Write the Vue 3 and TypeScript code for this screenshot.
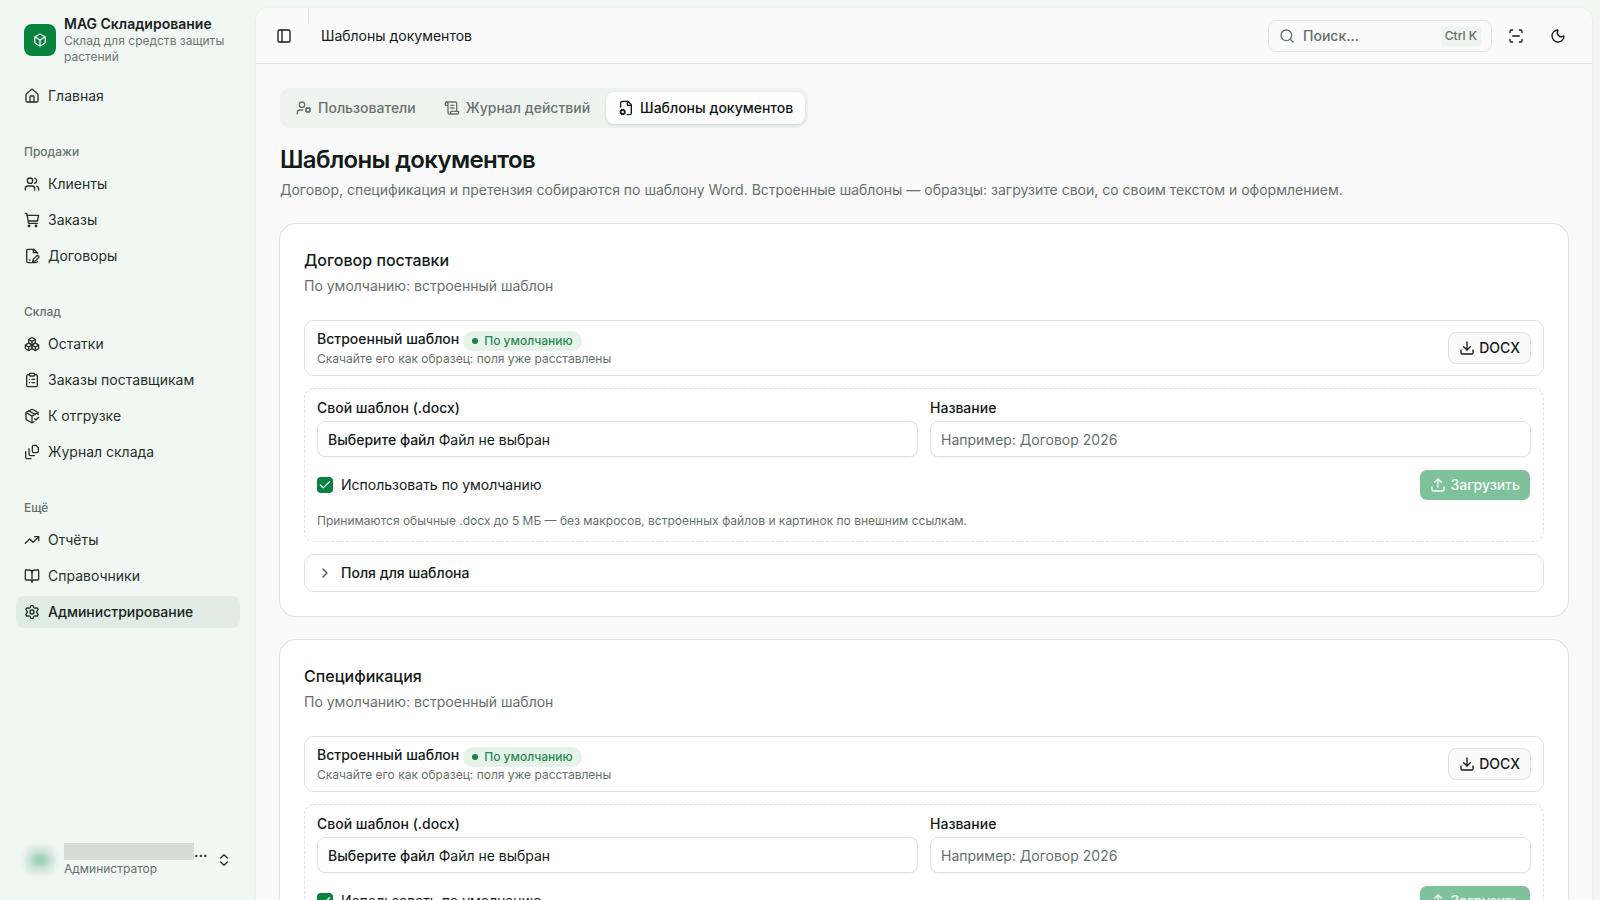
<script setup lang="ts">
import { h, type FunctionalComponent } from 'vue'

const icons: Record<string, string[]> = {
  box: ['M21 8a2 2 0 0 0-1-1.73l-7-4a2 2 0 0 0-2 0l-7 4A2 2 0 0 0 3 8v8a2 2 0 0 0 1 1.73l7 4a2 2 0 0 0 2 0l7-4A2 2 0 0 0 21 16Z', 'm3.3 7 8.7 5 8.7-5', 'M12 22V12'],
  house: ['M15 21v-8a1 1 0 0 0-1-1h-4a1 1 0 0 0-1 1v8', 'M3 10a2 2 0 0 1 .709-1.528l7-6a2 2 0 0 1 2.582 0l7 6A2 2 0 0 1 21 10v9a2 2 0 0 1-2 2H5a2 2 0 0 1-2-2z'],
  users: ['M16 21v-2a4 4 0 0 0-4-4H6a4 4 0 0 0-4 4v2', 'M16 3.128a4 4 0 0 1 0 7.744', 'M22 21v-2a4 4 0 0 0-3-3.87', 'M5 7a4 4 0 1 0 8 0a4 4 0 1 0-8 0'],
  cart: ['M6.3 21a1.2 1.2 0 1 0 2.4 0a1.2 1.2 0 1 0-2.4 0', 'M16.8 21a1.2 1.2 0 1 0 2.4 0a1.2 1.2 0 1 0-2.4 0', 'M2 2h2.2L7 17h13', 'M4.8 5H22l-1.8 8.5H6.4'],
  contract: ['m18.2 12.6.8-.8a2 2 0 0 1 2.8 2.8l-5.1 5.1-3.7.9.9-3.7z', 'M20 8V7l-5-5H6a2 2 0 0 0-2 2v16a2 2 0 0 0 2 2h12a2 2 0 0 0 2-2', 'M14 2v5h6', 'M8 18h1'],
  boxes: ['M2.97 12.92A2 2 0 0 0 2 14.63v3.24a2 2 0 0 0 .97 1.71l3 1.8a2 2 0 0 0 2.06 0L12 19v-5.5l-5-3-4.03 2.42Z', 'm7 16.5-4.74-2.85', 'm7 16.5 5-3', 'M7 16.5v5.17', 'M12 13.5V19l3.97 2.38a2 2 0 0 0 2.06 0l3-1.8a2 2 0 0 0 .97-1.71v-3.24a2 2 0 0 0-.97-1.71L17 10.5l-5 3Z', 'm17 16.5-5-3', 'm17 16.5 4.74-2.85', 'M17 16.5v5.17', 'M7.97 4.42A2 2 0 0 0 7 6.13v4.37l5 3 5-3V6.13a2 2 0 0 0-.97-1.71l-3-1.8a2 2 0 0 0-2.06 0l-3 1.8Z', 'M12 8 7.26 5.15', 'm12 8 4.74-2.85', 'M12 13.5V8'],
  clipboard: ['M9 2h6a1 1 0 0 1 1 1v2a1 1 0 0 1-1 1H9a1 1 0 0 1-1-1V3a1 1 0 0 1 1-1z', 'M16 4h2a2 2 0 0 1 2 2v14a2 2 0 0 1-2 2H6a2 2 0 0 1-2-2V6a2 2 0 0 1 2-2h2', 'M12 11h4', 'M12 16h4', 'M8 11h.01', 'M8 16h.01'],
  packageCheck: ['m16 16 2 2 4-4', 'M21 10V8a2 2 0 0 0-1-1.73l-7-4a2 2 0 0 0-2 0l-7 4A2 2 0 0 0 3 8v8a2 2 0 0 0 1 1.73l7 4a2 2 0 0 0 2 0l2-1.14', 'm7.5 4.27 9 5.15', 'M3.29 7 12 12l8.71-5', 'M12 22V12'],
  stack: ['M14.5 2H18l3.5 3.5V11a2 2 0 0 1-2 2h-5a2 2 0 0 1-2-2V4a2 2 0 0 1 2-2z', 'M7.5 7v8.5a2 2 0 0 0 2 2H15.5', 'M2.5 11.5V20a2 2 0 0 0 2 2H10.5'],
  trend: ['M16 7h6v6', 'm22 7-8.5 8.5-5-5L2 17'],
  book: ['M12 7v14', 'M3 18a1 1 0 0 1-1-1V4a1 1 0 0 1 1-1h5a4 4 0 0 1 4 4 4 4 0 0 1 4-4h5a1 1 0 0 1 1 1v13a1 1 0 0 1-1 1h-6a3 3 0 0 0-3 3 3 3 0 0 0-3-3z'],
  settings: ['M9.671 4.136a2.34 2.34 0 0 1 4.659 0 2.34 2.34 0 0 0 3.319 1.915 2.34 2.34 0 0 1 2.33 4.033 2.34 2.34 0 0 0 0 3.831 2.34 2.34 0 0 1-2.33 4.033 2.34 2.34 0 0 0-3.319 1.915 2.34 2.34 0 0 1-4.659 0 2.34 2.34 0 0 0-3.32-1.915 2.34 2.34 0 0 1-2.33-4.033 2.34 2.34 0 0 0 0-3.831A2.34 2.34 0 0 1 6.35 6.051a2.34 2.34 0 0 0 3.319-1.915', 'M9 12a3 3 0 1 0 6 0a3 3 0 1 0-6 0'],
  chevrons: ['m7 15 5 5 5-5', 'm7 9 5-5 5 5'],
  panel: ['M5 3h14a2 2 0 0 1 2 2v14a2 2 0 0 1-2 2H5a2 2 0 0 1-2-2V5a2 2 0 0 1 2-2z', 'M9 3v18'],
  search: ['m21 21-4.34-4.34', 'M3 11a8 8 0 1 0 16 0a8 8 0 1 0-16 0'],
  scan: ['M3 7V5a2 2 0 0 1 2-2h2', 'M17 3h2a2 2 0 0 1 2 2v2', 'M21 17v2a2 2 0 0 1-2 2h-2', 'M7 21H5a2 2 0 0 1-2-2v-2', 'M7 12h10'],
  moon: ['M20.985 12.486a9 9 0 1 1-9.473-9.472c.405-.022.617.46.402.803a6 6 0 0 0 8.268 8.268c.344-.215.825-.004.803.401'],
  userCog: ['M5 7a4 4 0 1 0 8 0a4 4 0 1 0-8 0', 'M10 15H6a4 4 0 0 0-4 4v2', 'M15 15a3 3 0 1 0 6 0a3 3 0 1 0-6 0', 'm14.305 16.53.923-.382', 'm15.228 13.852-.923-.383', 'm16.852 12.228-.383-.923', 'm16.852 17.772-.383.924', 'm19.148 12.228.383-.923', 'm19.53 18.696-.382-.924', 'm20.772 13.852.924-.383', 'm20.772 16.148.924.383'],
  scroll: ['M15 12h-5', 'M15 8h-5', 'M19 17V5a2 2 0 0 0-2-2H4', 'M8 21h12a2 2 0 0 0 2-2v-1a1 1 0 0 0-1-1H11a1 1 0 0 0-1 1v1a2 2 0 1 1-4 0V5a2 2 0 1 0-4 0v2a1 1 0 0 0 1 1h3'],
  fileCog: ['M14 2v5a1 1 0 0 0 1 1h5', 'M13.85 22H18a2 2 0 0 0 2-2V8a2.4 2.4 0 0 0-.706-1.706l-3.588-3.588A2.4 2.4 0 0 0 14 2H6a2 2 0 0 0-2 2v6.6', 'M4 18a3 3 0 1 0 6 0a3 3 0 1 0-6 0', 'm3.305 19.53.923-.382', 'm4.228 16.852-.924-.383', 'm5.852 15.228-.383-.923', 'm5.852 20.772-.383.924', 'm8.148 15.228.383-.923', 'm8.53 21.696-.382-.924', 'm9.773 16.852.922-.383', 'm9.773 19.148.922.383'],
  download: ['M12 15V3', 'M21 15v4a2 2 0 0 1-2 2H5a2 2 0 0 1-2-2v-4', 'm7 10 5 5 5-5'],
  upload: ['M12 3v12', 'M21 15v4a2 2 0 0 1-2 2H5a2 2 0 0 1-2-2v-4', 'm7 8 5-5 5 5'],
  chevron: ['m9 18 6-6-6-6'],
  check: ['M20 6 9 17l-5-5'],
}

const Icon: FunctionalComponent<{ name: string }> = (props) =>
  h(
    'svg',
    { viewBox: '0 0 24 24', fill: 'none', stroke: 'currentColor', 'stroke-width': 2, 'stroke-linecap': 'round', 'stroke-linejoin': 'round' },
    icons[props.name].map((d) => h('path', { d })),
  )
Icon.props = ['name']

interface NavItem { icon: string; label: string; active?: boolean }
const groups: { title?: string; items: NavItem[] }[] = [
  { items: [{ icon: 'house', label: 'Главная' }] },
  {
    title: 'Продажи',
    items: [
      { icon: 'users', label: 'Клиенты' },
      { icon: 'cart', label: 'Заказы' },
      { icon: 'contract', label: 'Договоры' },
    ],
  },
  {
    title: 'Склад',
    items: [
      { icon: 'boxes', label: 'Остатки' },
      { icon: 'clipboard', label: 'Заказы поставщикам' },
      { icon: 'packageCheck', label: 'К отгрузке' },
      { icon: 'stack', label: 'Журнал склада' },
    ],
  },
  {
    title: 'Ещё',
    items: [
      { icon: 'trend', label: 'Отчёты' },
      { icon: 'book', label: 'Справочники' },
      { icon: 'settings', label: 'Администрирование', active: true },
    ],
  },
]
const tabs: NavItem[] = [
  { icon: 'userCog', label: 'Пользователи' },
  { icon: 'scroll', label: 'Журнал действий' },
  { icon: 'fileCog', label: 'Шаблоны документов', active: true },
]
const cards = ['Договор поставки', 'Спецификация']
</script>

<template>
  <div class="app">
    <aside class="sidebar">
      <div class="brand">
        <div class="logo"><Icon name="box" /></div>
        <div class="brand-text">
          <div class="brand-name">MAG Складирование</div>
          <div class="brand-sub">Склад для средств защиты растений</div>
        </div>
      </div>
      <nav>
        <section v-for="(g, i) in groups" :key="i" class="group">
          <div v-if="g.title" class="group-title">{{ g.title }}</div>
          <div class="group-items">
            <a v-for="n in g.items" :key="n.label" class="nav-item" :class="{ active: n.active }">
              <Icon :name="n.icon" /><span>{{ n.label }}</span>
            </a>
          </div>
        </section>
      </nav>
      <div class="user">
        <div class="avatar"></div>
        <div class="user-text">
          <div class="user-name"><span class="mask"></span><span>...</span></div>
          <div class="user-role">Администратор</div>
        </div>
        <Icon name="chevrons" />
      </div>
    </aside>

    <main class="inset">
      <header class="topbar">
        <Icon name="panel" />
        <span class="divider"></span>
        <span class="crumb">Шаблоны документов</span>
        <div class="search">
          <Icon name="search" /><span>Поиск...</span><kbd>Ctrl K</kbd>
        </div>
        <button class="icon-btn"><Icon name="scan" /></button>
        <button class="icon-btn"><Icon name="moon" /></button>
      </header>

      <div class="content">
        <div class="tabs">
          <div v-for="t in tabs" :key="t.label" class="tab" :class="{ active: t.active }">
            <Icon :name="t.icon" /><span>{{ t.label }}</span>
          </div>
        </div>
        <h1>Шаблоны документов</h1>
        <p class="lead">Договор, спецификация и претензия собираются по шаблону Word. Встроенные шаблоны — образцы: загрузите свои, со своим текстом и оформлением.</p>

        <section v-for="c in cards" :key="c" class="card">
          <h2>{{ c }}</h2>
          <p class="card-sub">По умолчанию: встроенный шаблон</p>
          <div class="builtin">
            <div>
              <div class="builtin-head">
                <span>Встроенный шаблон</span>
                <span class="badge"><i></i>По умолчанию</span>
              </div>
              <div class="hint">Скачайте его как образец: поля уже расставлены</div>
            </div>
            <button class="docx"><Icon name="download" /><span>DOCX</span></button>
          </div>
          <div class="upload-box">
            <div class="fields">
              <div>
                <div class="label">Свой шаблон (.docx)</div>
                <div class="input"><b>Выберите файл</b> Файл не выбран</div>
              </div>
              <div>
                <div class="label">Название</div>
                <div class="input placeholder">Например: Договор 2026</div>
              </div>
            </div>
            <div class="actions">
              <span class="checkbox"><Icon name="check" /></span>
              <span>Использовать по умолчанию</span>
              <button class="upload"><Icon name="upload" /><span>Загрузить</span></button>
            </div>
            <div class="hint note">Принимаются обычные .docx до 5 МБ — без макросов, встроенных файлов и картинок по внешним ссылкам.</div>
          </div>
          <div class="details"><Icon name="chevron" /><span>Поля для шаблона</span></div>
        </section>
      </div>
    </main>
  </div>
</template>

<style>
body { margin: 0; overflow: hidden; }
</style>

<style scoped>
* { box-sizing: border-box; }
.app {
  display: flex;
  width: 1600px;
  height: 900px;
  overflow: hidden;
  background: #f1f8f4;
  color: #141a17;
  font: 400 14px/20px Inter, "Noto Sans", sans-serif;
}
svg { width: 16px; height: 16px; flex: none; display: block; }
button { font: inherit; color: inherit; border: 0; background: none; padding: 0; }
h1, h2, p { margin: 0; }

.sidebar { width: 256px; flex: none; display: flex; flex-direction: column; color: #26302a; }
.brand { display: flex; align-items: center; gap: 8px; padding: 16px 16px 0 24px; height: 64px; }
.logo { width: 32px; height: 32px; border-radius: 8px; background: #07833f; color: #fff; display: grid; place-items: center; flex: none; }
.logo svg { width: 14px; height: 14px; }
.brand-text { align-self: flex-start; }
.brand-name { font-weight: 600; line-height: 16px; margin-bottom: 1px; color: #1a221e; white-space: nowrap; }
.brand-sub { font-size: 12px; line-height: 16px; color: #6d7771; }
nav { padding-top: 8px; display: flex; flex-direction: column; gap: 8px; }
.group { padding: 8px 16px; }
.group-title { height: 32px; padding: 0 8px; display: flex; align-items: center; font-size: 12px; font-weight: 500; color: #67706b; }
.group-items { display: flex; flex-direction: column; gap: 4px; }
.nav-item { height: 32px; display: flex; align-items: center; gap: 8px; padding: 0 8px; border-radius: 8px; }
.nav-item.active { background: #e0ebe4; font-weight: 500; color: #16241c; }
.user { margin-top: auto; margin-bottom: 16px; height: 48px; padding: 0 24px; display: flex; align-items: center; gap: 8px; }
.avatar { width: 32px; height: 32px; border-radius: 10px; flex: none; background: radial-gradient(ellipse 20px 16px at center, #92cbac 0, #a5d4b9 26%, #d5e8dd 62%, #e3eee8 100%); filter: blur(2px); }
.user-text { flex: 1; }
.user-name { display: flex; align-items: flex-end; height: 17px; line-height: 17px; font-weight: 600; }
.mask { width: 130px; flex: none; height: 17px; background: #d6dcd8; }
.user-role { font-size: 12px; line-height: 17px; color: #67706b; }

.inset { flex: 1; margin: 8px 8px 0 0; background: #f9faf9; border-radius: 12px 12px 0 0; box-shadow: 0 1px 3px rgba(0, 0, 0, 0.1); height: 1000px; overflow: hidden; }
.topbar { height: 56px; border-bottom: 1px solid #dfe3e1; display: flex; align-items: center; padding: 0 18px 0 20px; }
.divider { width: 1px; height: 16px; background: #dfe3e1; align-self: flex-start; margin: 0 12px 0 16px; }
.search { margin-left: auto; width: 224px; height: 32px; border: 1px solid #dfe3e1; border-radius: 8px; display: flex; align-items: center; gap: 8px; padding: 0 10px; color: #656d69; font-weight: 500; }
kbd { margin-left: auto; height: 20px; padding: 0 4px; border-radius: 4px; background: #eff4f1; font: 500 12px/20px Inter, sans-serif; }
.icon-btn { width: 32px; height: 32px; display: grid; place-items: center; margin-left: 8px; }
.icon-btn + .icon-btn { margin-left: 10px; }

.content { padding: 24px; }
.tabs { display: inline-flex; gap: 4px; height: 40px; padding: 4px 3px 4px 4px; border-radius: 10px; background: #eef3f0; vertical-align: top; }
.tab { display: flex; align-items: center; gap: 6px; padding: 0 12px; font-weight: 500; color: #69726d; border-radius: 8px; }
.tab.active { background: #fcfdfc; color: #111613; box-shadow: 0 1px 3px rgba(0, 0, 0, 0.14); }
h1 { font-size: 24px; line-height: 32px; font-weight: 600; letter-spacing: -0.62px; margin-top: 16px; }
.lead { margin-top: 4px; color: #68706c; white-space: nowrap; }

.card { margin-top: 24px; padding: 24px; background: #fff; border-radius: 16px; box-shadow: 0 0 0 1px #dfe3e1, 0 1px 3px rgba(0, 0, 0, 0.05); }
h2 { font-size: 16px; line-height: 24px; font-weight: 500; }
.card-sub { margin-top: 4px; color: #68706c; }
.builtin { margin-top: 24px; height: 56px; border: 1px solid #dfe3e1; border-radius: 10px; padding: 0 12px; display: flex; align-items: center; justify-content: space-between; }
.builtin-head { display: flex; font-weight: 500; gap: 4px; align-items: flex-start; height: 22px; }
.badge { display: flex; align-items: center; gap: 6px; height: 20px; margin-top: 2px; padding: 0 9px; border-radius: 10px; background: #e6f3eb; color: #26894f; font-size: 12px; }
.badge i { width: 6px; height: 6px; border-radius: 50%; background: #168447; }
.hint { font-size: 12px; line-height: 16px; color: #68706c; }
.docx { display: flex; align-items: center; gap: 4px; height: 32px; padding: 0 10px; border: 1px solid #dfe3e1; border-radius: 8px; background: #f9faf9; font-weight: 500; }
.upload-box { margin-top: 12px; height: 154px; border: 1px dashed #dfe3e1; border-radius: 10px; padding: 9px 12px 8px; }
.fields { display: grid; grid-template-columns: 1fr 1fr; gap: 12px; }
.label { font-weight: 500; line-height: 20px; margin-bottom: 3px; }
.input { height: 36px; border: 1px solid #dfe3e1; border-radius: 8px; padding: 0 10px; line-height: 35px; box-shadow: 0 1px 1px rgba(0, 0, 0, 0.04); white-space: pre; }
.input b { font-weight: 500; }
.placeholder { color: #68706c; }
.actions { margin-top: 12px; height: 32px; display: flex; align-items: center; }
.checkbox { width: 16px; height: 16px; border-radius: 4px; background: #07833f; color: #fff; display: grid; place-items: center; margin-right: 8px; }
.checkbox svg { width: 14px; height: 14px; }
.upload { margin-left: auto; display: flex; align-items: center; gap: 4px; height: 30px; padding: 0 10px; margin-right: 1px; border-radius: 7px; background: #80c19d; color: #f4fbf7; font-weight: 500; }
.note { margin-top: 12px; }
.details { margin-top: 12px; height: 38px; border: 1px solid #dfe3e1; border-radius: 10px; padding: 0 12px; display: flex; align-items: center; gap: 8px; font-weight: 500; }
.details svg { color: #4d5551; }
</style>
